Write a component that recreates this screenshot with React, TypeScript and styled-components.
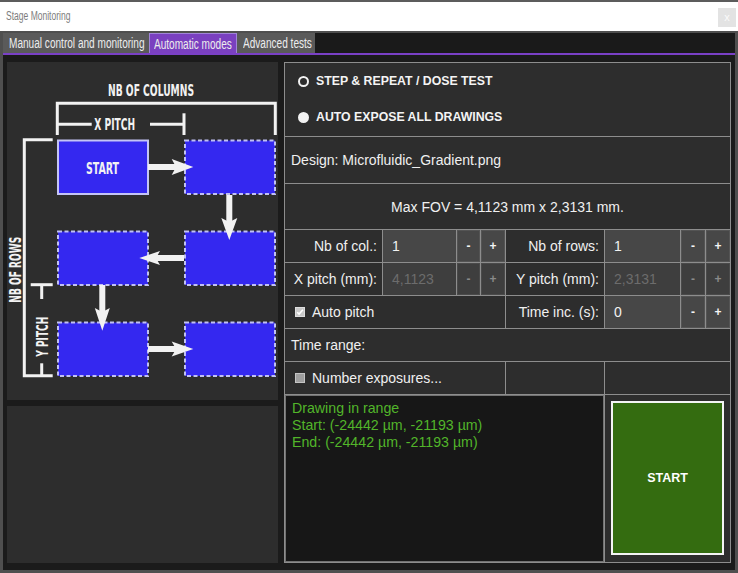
import React from 'react';
import styled, { createGlobalStyle } from 'styled-components';

const Global = createGlobalStyle`
  html, body { margin: 0; padding: 0; background: #1b1b1b; }
  body { width: 738px; height: 573px; overflow: hidden; font-family: "Liberation Sans", Arial, sans-serif; }
  #root { width: 738px; height: 573px; }
  * { box-sizing: border-box; }
`;

const Page = styled.div`
  width: 738px;
  height: 573px;
  display: flex;
  flex-direction: column;
  background: #5a5a5a;
`;

const TopStrip = styled.div`
  flex: none;
  height: 2px;
  background: #5c5c5c;
`;

const TitleBar = styled.div`
  flex: none;
  height: 29px;
  background: #ffffff;
  display: flex;
  align-items: center;
  justify-content: space-between;
  padding: 0 2px 0 6px;
`;

const Title = styled.span`
  display: inline-block;
  font-size: 12px;
  color: #7c7c7c;
  transform: scaleX(0.71);
  transform-origin: 0 50%;
  margin-top: -1px;
`;

const CloseButton = styled.div`
  width: 18px;
  height: 19px;
  background: #e3e3e3;
  color: #fafafa;
  font-size: 11px;
  display: flex;
  align-items: center;
  justify-content: center;
  margin-top: 1px;
`;

const Window = styled.div`
  flex: 1;
  min-height: 0;
  display: flex;
  flex-direction: column;
  border: 3px solid #4f4f4f;
  border-top-width: 2px;
  background: #1b1b1b;
`;

const TabBar = styled.div`
  flex: none;
  height: 22px;
  display: flex;
  background: #1a1a1a;
  border-bottom: 2px solid #7a40c6;
`;

const Tab = styled.div<{ $active?: boolean; $w: number }>`
  width: ${p => p.$w}px;
  height: 20px;
  padding-left: ${p => (p.$active ? 4 : 6)}px;
  background: ${p => (p.$active ? '#7a40c0' : '#5a5a5a')};
  border: ${p => (p.$active ? '1px solid #a084d8' : 'none')};
  border-bottom: none;
  color: #ededed;
  font-size: 15.5px;
  line-height: ${p => (p.$active ? 19 : 20)}px;
  white-space: nowrap;
  overflow: hidden;
`;

const TabLabel = styled.span`
  display: inline-block;
  transform: scaleX(0.65);
  transform-origin: 0 50%;
`;

const Content = styled.div`
  flex: 1;
  min-height: 0;
  display: flex;
  gap: 6px;
  padding: 7px 4px;
`;

const LeftColumn = styled.div`
  width: 271px;
  display: flex;
  flex-direction: column;
  gap: 6px;
`;

const DiagramPanel = styled.div`
  height: 338px;
  background: #2d2d2d;
`;

const PreviewPanel = styled.div`
  flex: 1;
  background: #2d2d2d;
`;

const Panel = styled.div`
  width: 447px;
  height: 501px;
  display: grid;
  grid-template-columns: 97px 73px 23px 24px 98px 75px 24px 24px;
  grid-template-rows: 73px 46px 45px 32px 32px 32px 32px 32px 167px;
  gap: 1px;
  padding: 1px;
  background: #8d8d8d;
`;

const Cell = styled.div<{ $span?: number }>`
  grid-column: span ${p => p.$span ?? 1};
  min-width: 0;
  background: #2d2d2d;
  display: flex;
  align-items: center;
  color: #f0f0f0;
  font-size: 14px;
  white-space: nowrap;
`;

const ModeCell = styled(Cell)`
  flex-direction: column;
  align-items: flex-start;
  justify-content: flex-start;
  gap: 16px;
  padding: 8px 0 0 13px;
`;

const RadioRow = styled.div`
  height: 20px;
  display: flex;
  align-items: center;
  gap: 7px;
  font-size: 12.3px;
  font-weight: bold;
  color: #f4f4f4;
`;

const RadioDot = styled.span<{ $checked?: boolean }>`
  width: 11px;
  height: 11px;
  border-radius: 50%;
  border: 2px solid #f2f2f2;
  background: ${p => (p.$checked ? '#f2f2f2' : 'transparent')};
`;

const InfoCell = styled(Cell)<{ $center?: boolean }>`
  justify-content: ${p => (p.$center ? 'center' : 'flex-start')};
  padding-left: ${p => (p.$center ? 0 : 6)}px;
`;

const LabelCell = styled(Cell)`
  justify-content: flex-end;
  padding-right: 5px;
`;

const InputCell = styled(Cell)<{ $disabled?: boolean }>`
  background: ${p => (p.$disabled ? '#3e3e3e' : '#474747')};
  color: ${p => (p.$disabled ? '#6c6c6c' : '#f2f2f2')};
  padding-left: 9px;
`;

const StepButton = styled(Cell)<{ $disabled?: boolean }>`
  justify-content: center;
  background: ${p => (p.$disabled ? '#3e3e3e' : '#474747')};
  box-shadow: inset 0 0 0 1px ${p => (p.$disabled ? '#4a4a4a' : '#545454')};
  color: ${p => (p.$disabled ? '#8a8a8a' : '#f4f4f4')};
  font-size: 12px;
  font-weight: bold;
`;

const CheckCell = styled(Cell)`
  padding-left: 10px;
  gap: 7px;
`;

const OutputCell = styled(Cell)`
  flex-direction: column;
  align-items: flex-start;
  justify-content: flex-start;
  background: #171717;
  border: 1px solid #727272;
  padding: 4px 6px;
  color: #52b52a;
  font-size: 14.2px;
  line-height: 17px;
`;

const ActionCell = styled(Cell)`
  padding: 6px 6px 7px;
  align-items: stretch;
`;

const StartButton = styled.div`
  flex: 1;
  background: #346c10;
  border: 2px solid #f4f4f4;
  color: #ffffff;
  font-size: 12.5px;
  font-weight: bold;
  display: flex;
  align-items: center;
  justify-content: center;
`;

const DiagramSvg = styled.svg`
  display: block;
  overflow: visible;
`;

const Check = ({ checked }: { checked?: boolean }) => (
  <svg width="10" height="10" viewBox="0 0 10 10">
    <rect x="0.5" y="0.5" width="9" height="9" fill={checked ? '#c9c9c9' : '#9f9f9f'} stroke={checked ? '#dedede' : '#c4c4c4'} />
    {checked && <path d="M2.2 5.2 L4.1 7.1 L7.9 2.8" fill="none" stroke="#ffffff" strokeWidth="1.6" />}
  </svg>
);

const INK = '#f2f2f2';
const BLUE = '#3428f0';
const EDGE = '#c0c0f4';

const labelFont = {
  fontFamily: '"DejaVu Sans Condensed", "DejaVu Sans", sans-serif',
  fontWeight: 700,
  fontSize: 16,
  fill: INK,
} as const;

const Diagram = () => {
  const cols = [50, 177];
  const rows = [77.5, 168.5, 259.5];
  return (
    <DiagramSvg width="271" height="338" viewBox="0 0 271 338">
      {rows.map((y, r) =>
        cols.map((x, c) => (
          <rect
            key={`${r}-${c}`}
            x={x + 1}
            y={y + 1}
            width={90}
            height={53.5}
            fill={BLUE}
            stroke={r === 0 && c === 0 ? '#c4c4f6' : EDGE}
            strokeWidth="2"
            strokeDasharray={r === 0 && c === 0 ? undefined : '4 2.5'}
          />
        ))
      )}
      <g fill="none" stroke={INK} strokeWidth="3">
        <path d="M50.3 73 V41.3 H268.3 V73" />
        <path d="M50.3 62.3 H84.7" />
        <path d="M143 62.3 H177" />
        <path d="M177 51.3 V73" />
        <path d="M45.7 77.7 H17.3 V313.7 H45.7" />
        <path d="M23.7 222.7 H45.7" />
        <path d="M34.7 222.7 V237" />
        <path d="M34.7 301.3 V313.7" />
      </g>
      <g fill={INK}>
        <rect x="141" y="102" width="29" height="6" />
        <polygon points="164.7,97 186.3,105 164.7,113 169,105" />
        <rect x="219.3" y="133" width="6" height="27" />
        <polygon points="214.3,156 222.3,178 230.3,156 222.3,160" />
        <rect x="149" y="193" width="28" height="6" />
        <polygon points="153,189 132.3,196 153,203 149,196" />
        <rect x="92.3" y="223" width="6" height="27" />
        <polygon points="87.8,246 95.3,268.7 102.8,246 95.3,250" />
        <rect x="141" y="284" width="29" height="6" />
        <polygon points="164.7,279.5 186.3,287 164.7,294.5 169,287" />
      </g>
      <text {...labelFont} x="144" y="33.7" textAnchor="middle" textLength="86" lengthAdjust="spacingAndGlyphs">NB OF COLUMNS</text>
      <text {...labelFont} x="107.7" y="68.3" textAnchor="middle" textLength="40.7" lengthAdjust="spacingAndGlyphs">X PITCH</text>
      <text {...labelFont} x="95.5" y="111.7" textAnchor="middle" textLength="33" lengthAdjust="spacingAndGlyphs">START</text>
      <text {...labelFont} fontSize={15.5} transform="rotate(-90)" x="-207.7" y="13.5" textAnchor="middle" textLength="66" lengthAdjust="spacingAndGlyphs">NB OF ROWS</text>
      <text {...labelFont} transform="rotate(-90)" x="-274.7" y="41.3" textAnchor="middle" textLength="40" lengthAdjust="spacingAndGlyphs">Y PITCH</text>
    </DiagramSvg>
  );
};

export default function App() {
  return (
    <Page>
      <Global />
      <TopStrip />
      <TitleBar>
        <Title>Stage Monitoring</Title>
        <CloseButton>x</CloseButton>
      </TitleBar>
      <Window>
        <TabBar>
          <Tab $w={146}><TabLabel>Manual control and monitoring</TabLabel></Tab>
          <Tab $w={88} $active><TabLabel>Automatic modes</TabLabel></Tab>
          <Tab $w={78}><TabLabel>Advanced tests</TabLabel></Tab>
        </TabBar>
        <Content>
          <LeftColumn>
            <DiagramPanel>
              <Diagram />
            </DiagramPanel>
            <PreviewPanel />
          </LeftColumn>
          <Panel>
            <ModeCell $span={8}>
              <RadioRow>
                <RadioDot />
                STEP &amp; REPEAT / DOSE TEST
              </RadioRow>
              <RadioRow>
                <RadioDot $checked />
                AUTO EXPOSE ALL DRAWINGS
              </RadioRow>
            </ModeCell>
            <InfoCell $span={8}>Design: Microfluidic_Gradient.png</InfoCell>
            <InfoCell $span={8} $center>Max FOV = 4,1123 mm x 2,3131 mm.</InfoCell>

            <LabelCell>Nb of col.:</LabelCell>
            <InputCell>1</InputCell>
            <StepButton>-</StepButton>
            <StepButton>+</StepButton>
            <LabelCell>Nb of rows:</LabelCell>
            <InputCell>1</InputCell>
            <StepButton>-</StepButton>
            <StepButton>+</StepButton>

            <LabelCell>X pitch (mm):</LabelCell>
            <InputCell $disabled>4,1123</InputCell>
            <StepButton $disabled>-</StepButton>
            <StepButton $disabled>+</StepButton>
            <LabelCell>Y pitch (mm):</LabelCell>
            <InputCell $disabled>2,3131</InputCell>
            <StepButton $disabled>-</StepButton>
            <StepButton $disabled>+</StepButton>

            <CheckCell $span={4}>
              <Check checked />
              Auto pitch
            </CheckCell>
            <LabelCell>Time inc. (s):</LabelCell>
            <InputCell>0</InputCell>
            <StepButton>-</StepButton>
            <StepButton>+</StepButton>

            <InfoCell $span={8}>Time range:</InfoCell>

            <CheckCell $span={4}>
              <Check />
              Number exposures...
            </CheckCell>
            <Cell />
            <Cell $span={3} />

            <OutputCell $span={5}>
              <span>Drawing in range</span>
              <span>Start: (-24442 µm, -21193 µm)</span>
              <span>End: (-24442 µm, -21193 µm)</span>
            </OutputCell>
            <ActionCell $span={3}>
              <StartButton>START</StartButton>
            </ActionCell>
          </Panel>
        </Content>
      </Window>
    </Page>
  );
}
